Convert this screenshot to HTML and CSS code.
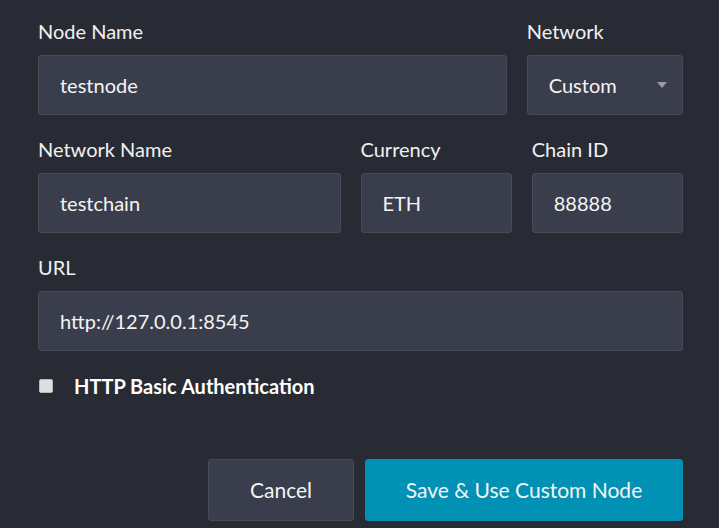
FILE: index.html
```html
<!DOCTYPE html>
<html>
<head>
<meta charset="utf-8">
<link rel="stylesheet" href="styles.css">
</head>
<body>
<div class="form">
  <div class="row row-top">
    <div class="field">
      <label class="label">Node Name</label>
      <div class="input">testnode</div>
    </div>
    <div class="field">
      <label class="label">Network</label>
      <div class="input select">Custom<span class="caret"></span></div>
    </div>
  </div>
  <div class="row row-mid">
    <div class="field">
      <label class="label">Network Name</label>
      <div class="input">testchain</div>
    </div>
    <div class="field">
      <label class="label">Currency</label>
      <div class="input">ETH</div>
    </div>
    <div class="field">
      <label class="label">Chain ID</label>
      <div class="input">88888</div>
    </div>
  </div>
  <div class="row">
    <div class="field">
      <label class="label">URL</label>
      <div class="input">http://127.0.0.1:8545</div>
    </div>
  </div>
  <div class="check-row">
    <span class="checkbox"></span>
    <span class="check-label">HTTP Basic Authentication</span>
  </div>
  <div class="actions">
    <button class="btn btn-cancel">Cancel</button>
    <button class="btn btn-primary">Save &amp; Use Custom Node</button>
  </div>
</div>
</body>
</html>
```
FILE: styles.css
```css
html, body {
  margin: 0;
  padding: 0;
  background: #282b34;
  height: 100%;
}
body {
  font-family: Lato, "Open Sans", sans-serif;
  color: #f2f2f2;
}
.form {
  width: 645px;
  padding: 19px 0 0 38px;
}
.row {
  display: grid;
  column-gap: 20px;
  margin-bottom: 22px;
}
.row-top {
  grid-template-columns: 3fr 1fr;
}
.row-mid {
  grid-template-columns: 2fr 1fr 1fr;
}
.field {
  display: flex;
  flex-direction: column;
}
.label {
  font-size: 20px;
  line-height: 24px;
  margin-bottom: 12px;
  color: #f0f0f0;
}
.input {
  box-sizing: border-box;
  height: 60px;
  background: #3a3e4c;
  border: 1px solid #474b59;
  border-radius: 3px;
  padding: 0 21px;
  display: flex;
  align-items: center;
  font-size: 20px;
  line-height: 24px;
  color: #f4f4f4;
}
.select {
  justify-content: space-between;
}
.caret {
  width: 0;
  height: 0;
  border-left: 5.5px solid transparent;
  border-right: 5.5px solid transparent;
  border-top: 6px solid #9a9ca3;
  margin-right: -6px;
}
.check-row {
  display: flex;
  align-items: center;
  height: 24px;
  margin-top: 23px;
}
.checkbox {
  box-sizing: border-box;
  width: 14px;
  height: 14px;
  background: #dedede;
  border: 1px solid #b9b9b9;
  border-radius: 2px;
  margin-left: 1px;
}
.check-label {
  font-weight: 700;
  font-size: 20px;
  margin-left: 21px;
  color: #ffffff;
}
.actions {
  display: flex;
  justify-content: flex-end;
  gap: 11px;
  margin-top: 61px;
}
.btn {
  font-family: Lato, "Open Sans", sans-serif;
  font-size: 21px;
  height: 62px;
  border-radius: 3px;
  color: #f4f4f4;
  padding: 0 0 2px 0;
  cursor: pointer;
}
.btn-cancel {
  width: 146px;
  background: #3a3e4c;
  border: 1px solid #474b59;
}
.btn-primary {
  width: 318px;
  background: #0191b5;
  border: 1px solid #0191b5;
}
```
